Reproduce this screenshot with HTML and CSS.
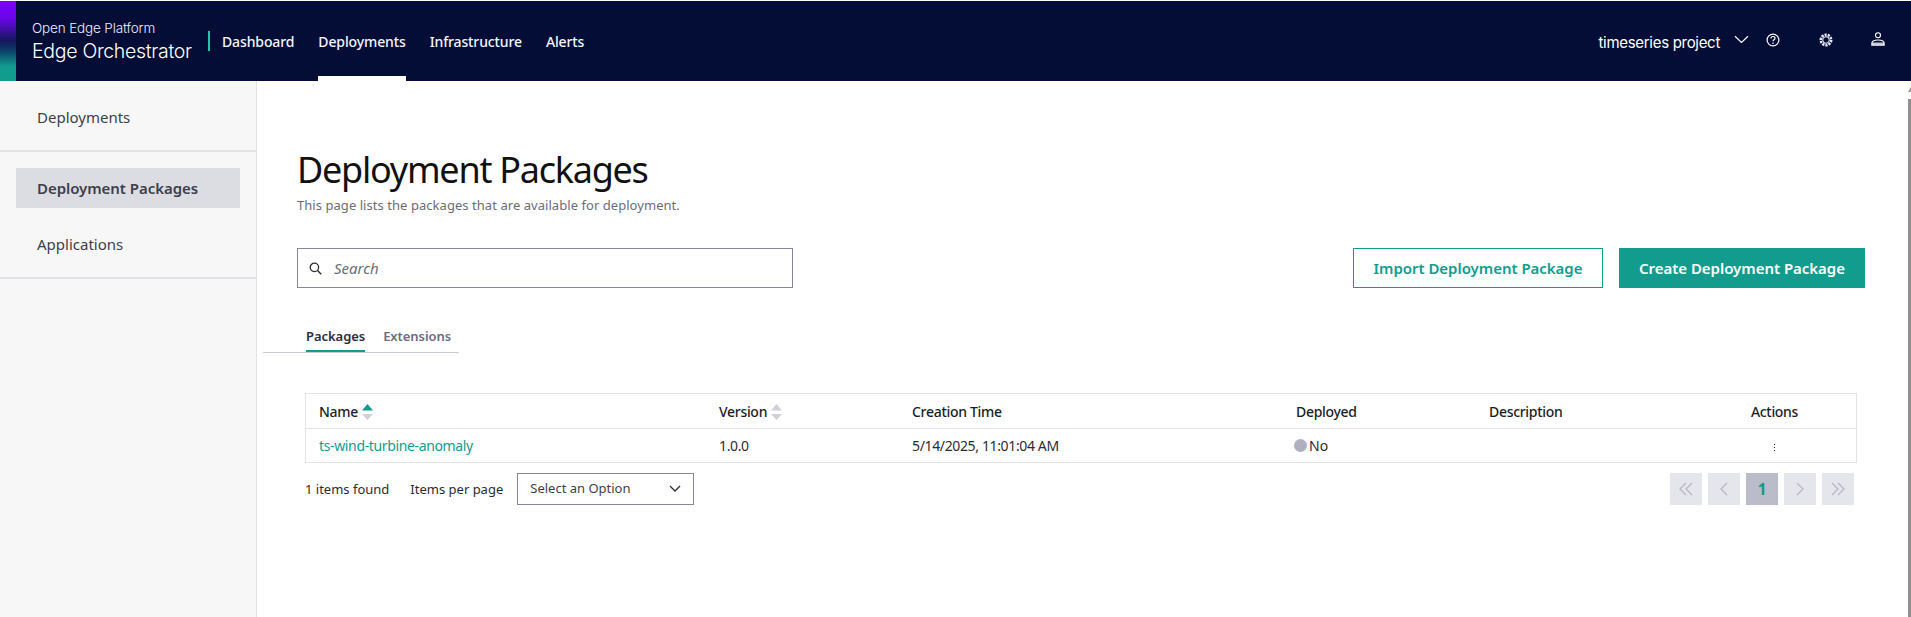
FILE: index.html
```html
<!DOCTYPE html>
<html lang="en">
<head>
<meta charset="utf-8">
<title>Deployment Packages</title>
<link rel="stylesheet" href="styles.css">
</head>
<body>
<div class="scrollbar"><span class="scroll-arrow"></span><span class="scroll-thumb"></span></div>
<header class="topbar">
  <div class="strip"></div>
  <div class="brand">
    <div class="brand-small">Open Edge Platform</div>
    <div class="brand-large">Edge Orchestrator</div>
  </div>
  <div class="brand-divider"></div>
  <nav class="topnav">
    <a class="topnav-item">Dashboard</a>
    <a class="topnav-item is-active">Deployments</a>
    <a class="topnav-item">Infrastructure</a>
    <a class="topnav-item">Alerts</a>
  </nav>
  <div class="top-right">
    <span class="project">timeseries project</span>
    <svg class="icon-chevron" width="15" height="9" viewBox="0 0 15 9"><path d="M1 1.2l6.500 6.300L14 1.200" fill="none" stroke="#fff" stroke-width="1.2"/></svg>
    <svg class="icon-help" width="14" height="14" viewBox="0 0 14 14"><circle cx="7" cy="7" r="5.9" fill="none" stroke="#fff" stroke-width="1.2"/><path d="M5 5.4c0-1.2 1-1.900 2-1.900s2 .7 2 1.800c0 1.500-2 1.500-2 3" fill="none" stroke="#fff" stroke-width="1.2"/><circle cx="7" cy="10.2" r=".8" fill="#fff"/></svg>
    <svg class="icon-gear" width="14" height="14" viewBox="0 0 14 14"><circle cx="7" cy="7" r="5.200" fill="none" stroke="#e6e6f4" stroke-width="2.600" stroke-dasharray="2.200 1"/><circle cx="7" cy="7" r="3.300" fill="none" stroke="#fff" stroke-width="1"/></svg>
    <svg class="icon-user" width="14" height="14" viewBox="0 0 14 14"><circle cx="7" cy="3.300" r="2.500" fill="none" stroke="#fff" stroke-width="1.1"/><path d="M1 10.500h12V13H1z" fill="#c4c6d4"/><path d="M.8 13.200V11.500C.8 9.400 3.500 8 7 8s6.200 1.400 6.200 3.500v1.700z" fill="none" stroke="#fff" stroke-width="1.100"/></svg>
  </div>
</header>
<div class="shell">
  <aside class="sidebar">
    <div class="side-group side-group-first">
      <a class="side-item">Deployments</a>
    </div>
    <div class="side-group side-group-second">
      <a class="side-item is-active">Deployment Packages</a>
      <a class="side-item">Applications</a>
    </div>
  </aside>
  <main class="content">
    <h1 class="title">Deployment Packages</h1>
    <p class="subtitle">This page lists the packages that are available for deployment.</p>
    <div class="toolbar">
      <div class="search">
        <svg class="icon-search" width="13" height="13" viewBox="0 0 13 13"><circle cx="5.400" cy="5.400" r="4.200" fill="none" stroke="#2b2c30" stroke-width="1.300"/><path d="M8.500 8.500l3.700 3.700" stroke="#2b2c30" stroke-width="1.400"/></svg>
        <span class="search-placeholder">Search</span>
      </div>
      <div class="actions">
        <button class="btn btn-outline">Import Deployment Package</button>
        <button class="btn btn-solid">Create Deployment Package</button>
      </div>
    </div>
    <div class="tabs">
      <a class="tab is-active">Packages</a>
      <a class="tab">Extensions</a>
    </div>
    <table class="grid">
      <colgroup>
        <col class="col-name"><col class="col-version"><col class="col-time"><col class="col-deployed"><col class="col-desc"><col class="col-actions">
      </colgroup>
      <thead>
        <tr>
          <th class="cell-first">Name <svg class="sort" width="11" height="16" viewBox="0 0 11 16"><path d="M5.500 0L11 6.500H0z" fill="#119c8d"/><path d="M0 10h11l-5.500 6z" fill="#cfd0d8"/></svg></th>
          <th>Version <svg class="sort" width="11" height="16" viewBox="0 0 11 16"><path d="M5.500 0L11 6.500H0z" fill="#cfd0d8"/><path d="M0 10h11l-5.500 6z" fill="#cfd0d8"/></svg></th>
          <th>Creation Time</th>
          <th>Deployed</th>
          <th>Description</th>
          <th class="th-actions">Actions</th>
        </tr>
      </thead>
      <tbody>
        <tr>
          <td class="cell-first"><a class="row-link">ts-wind-turbine-anomaly</a></td>
          <td>1.0.0</td>
          <td>5/14/2025, 11:01:04 AM</td>
          <td><span class="status"><span class="status-dot"></span>No</span></td>
          <td></td>
          <td class="td-actions"><span class="kebab"><i></i><i></i><i></i></span></td>
        </tr>
      </tbody>
    </table>
    <div class="table-footer">
      <span class="found">1 items found</span>
      <span class="per-page">Items per page</span>
      <div class="select">
        <span>Select an Option</span>
        <svg width="12" height="7" viewBox="0 0 12 7"><path d="M1 1l5 5 5-5" fill="none" stroke="#2b2c30" stroke-width="1.300"/></svg>
      </div>
      <div class="pager">
        <span class="page"><svg width="14" height="14" viewBox="0 0 14 14"><path d="M7 1L1 7l6 6M13 1L7 7l6 6" class="pg"/></svg></span>
        <span class="page"><svg width="8" height="14" viewBox="0 0 8 14"><path d="M7 1L1 7l6 6" class="pg"/></svg></span>
        <span class="page is-current">1</span>
        <span class="page"><svg width="8" height="14" viewBox="0 0 8 14"><path d="M1 1l6 6-6 6" class="pg"/></svg></span>
        <span class="page"><svg width="14" height="14" viewBox="0 0 14 14"><path d="M1 1l6 6-6 6M7 1l6 6-6 6" class="pg"/></svg></span>
      </div>
    </div>
  </main>
</div>
</body>
</html>
```
FILE: styles.css
```css
* { box-sizing: border-box; }
html, body { margin: 0; height: 617px; overflow: hidden; }
body {
  position: relative;
  background: #fff;
  font-family: "Noto Sans", "Open Sans", sans-serif;
  color: #2b2c30;
  font-size: 14px;
  padding-top: 1px;
}
.topbar {
  display: flex;
  align-items: stretch;
  height: 80px;
  background: #030d36;
  color: #fff;
}
.strip {
  width: 16px;
  background: linear-gradient(180deg, #7a00ff 0%, #6a06e8 22%, #14185c 50%, #0b3f66 62%, #119c8d 82%, #119c8d 100%);
}
.brand {
  margin-left: 16px;
  width: 176px;
  font-family: Inter, sans-serif;
  padding-top: 19px;
  white-space: nowrap;
}
.brand-small { font-size: 13.5px; font-weight: 300; line-height: 17px; letter-spacing: -0.15px; color: #eef; }
.brand-large { font-size: 19.500px; font-weight: 300; line-height: 25px; margin-top: 2px; letter-spacing: -0.3px; }
.brand-divider {
  width: 2px;
  height: 20px;
  margin: 30px 0 0;
  background: #1fc7b0;
}
.topnav { display: flex; margin-left: 12px; gap: 24px; }
.topnav-item {
  display: flex;
  align-items: center;
  padding-bottom: 0;
  font-size: 14px;
  font-weight: 500;
  letter-spacing: -0.12px;
  color: #f2f6ff;
  border-bottom: 5px solid transparent;
  padding-top: 5px;
}
.topnav-item.is-active { border-bottom-color: #fff; }
.top-right {
  margin-left: auto;
  display: flex;
  align-items: center;
  padding-right: 26px;
}
.project { font-family: Inter, sans-serif; font-size: 15px; font-weight: 400; letter-spacing: -0.3px; margin-top: 3px; }
.icon-chevron { margin-left: 14px; margin-top: -3px; }
.icon-help { margin-left: 17px; margin-top: -2px; }
.icon-gear { margin-left: 39px; margin-top: -2px; }
.icon-user { margin-left: 38px; margin-top: -4px; }

.shell { display: flex; height: 536px; }
.sidebar {
  width: 257px;
  flex: none;
  background: #f7f7f7;
  border-right: 1px solid #e2e2e6;
}
.side-group { border-bottom: 2px solid #e2e2e8; }
.side-group-first { height: 71px; padding-top: 16px; }
.side-group-second { height: 127px; padding-top: 16px; }
.side-item {
  display: flex;
  align-items: center;
  height: 40px;
  margin: 0 16px;
  padding-left: 21px;
  font-size: 15px;
  color: #3d3f4a;
}
.side-item.is-active { background: #dcdde3; font-weight: 600; letter-spacing: -0.05px; margin-bottom: 16px; }

.content { flex: 1; padding-left: 40px; min-width: 0; }
.title {
  margin: 65px 0 0;
  font-size: 36px;
  line-height: 48px;
  font-weight: 400;
  letter-spacing: -1.25px;
  color: #111;
}
.subtitle { margin: 2px 0 0; font-size: 13px; line-height: 18px; letter-spacing: 0.05px; color: #6a6d78; }
.toolbar { display: flex; justify-content: space-between; margin-top: 34px; padding-right: 46px; }
.search {
  display: flex;
  align-items: center;
  width: 496px;
  height: 40px;
  border: 1px solid #85889a;
  padding-left: 11px;
}
.search-placeholder { margin-left: 12px; font-style: italic; font-size: 15px; color: #6a6d78; }
.actions { display: flex; gap: 16px; }
.btn {
  height: 40px;
  font-family: inherit;
  font-size: 15px;
  font-weight: 600;
  letter-spacing: -0.03px;
  border: 1px solid #119c8d;
  padding: 0;
}
.btn-outline { width: 250px; background: #fff; color: #119c8d; }
.btn-solid { width: 246px; background: #119c8d; color: #fff; }
.tabs {
  display: flex;
  gap: 18px;
  width: 196px;
  height: 33px;
  margin: 32px 0 0 -34px;
  padding: 6px 0 0 43px;
  border-bottom: 1px solid #c9cad6;
}
.tab {
  height: 26px;
  font-size: 13px;
  font-weight: 600;
  letter-spacing: -0.05px;
  line-height: 21px;
  color: #6a6d85;
}
.tab.is-active { color: #2b2c40; border-bottom: 2px solid #119c8d; }
.grid {
  table-layout: fixed;
  border-collapse: separate;
  border-spacing: 0;
  width: 1552px;
  margin: 40px 0 0 8px;
  border: 1px solid #e4e4e6;
  font-size: 14px;
}
.col-name { width: 399px; }
.col-version { width: 193px; }
.col-time { width: 384px; }
.col-deployed { width: 193px; }
.col-desc { width: 218px; }
.col-actions { width: 163px; }
.grid th {
  height: 35px;
  padding: 0 0 0 14px;
  text-align: left;
  font-weight: 500;
  letter-spacing: -0.3px;
  color: #1c1d22;
  border-bottom: 1px solid #e4e4e6;
  white-space: nowrap;
}
.grid td {
  height: 33px;
  padding: 0 0 0 14px;
  letter-spacing: -0.36px;
  color: #2b2c30;
  white-space: nowrap;
}
.grid .cell-first { padding-left: 13px; }
.grid .th-actions, .grid .td-actions { text-align: center; padding: 0; }
.sort { vertical-align: -3px; margin-left: 1px; }
.row-link { color: #119c8d; }
.status { display: inline-flex; align-items: center; margin-left: -2px; margin-top: 1px; letter-spacing: 0; }
.status-dot { width: 13px; height: 13px; border-radius: 50%; background: #aeb0bf; margin-right: 2px; }
.kebab { display: inline-flex; flex-direction: column; gap: 2px; vertical-align: 6px; }
.kebab i { width: 1px; height: 1px; background: #222; }
.table-footer {
  display: flex;
  align-items: center;
  width: 1552px;
  margin: 10px 0 0 8px;
  height: 32px;
  font-size: 13px;
}
.per-page { margin-left: 21px; }
.select {
  display: flex;
  align-items: center;
  justify-content: space-between;
  width: 177px;
  height: 32px;
  margin-left: 14px;
  padding: 0 12px 2px;
  border: 1px solid #85889a;
  font-size: 13px;
  color: #3d3f4a;
}
.pager { display: flex; gap: 6px; margin-left: auto; margin-right: 3px; }
.page {
  display: flex;
  align-items: center;
  justify-content: center;
  width: 32px;
  height: 32px;
  background: #e5e6eb;
}
.page.is-current { background: #babdc9; color: #119c8d; font-weight: 700; font-size: 16px; }
.pg { fill: none; stroke: #b4b6c4; stroke-width: 1.2; }
.scrollbar {
  position: absolute;
  top: 81px;
  right: 0;
  width: 3px;
  height: 536px;
  background: #f9f9f9;
}
.scroll-arrow {
  position: absolute;
  top: 6px;
  left: 0;
  border-left: 3px solid transparent;
  border-bottom: 5px solid #9a9a9a;
}
.scroll-thumb {
  position: absolute;
  top: 18px;
  bottom: 0;
  left: 0;
  width: 3px;
  background: #8f8f8f;
}
```
